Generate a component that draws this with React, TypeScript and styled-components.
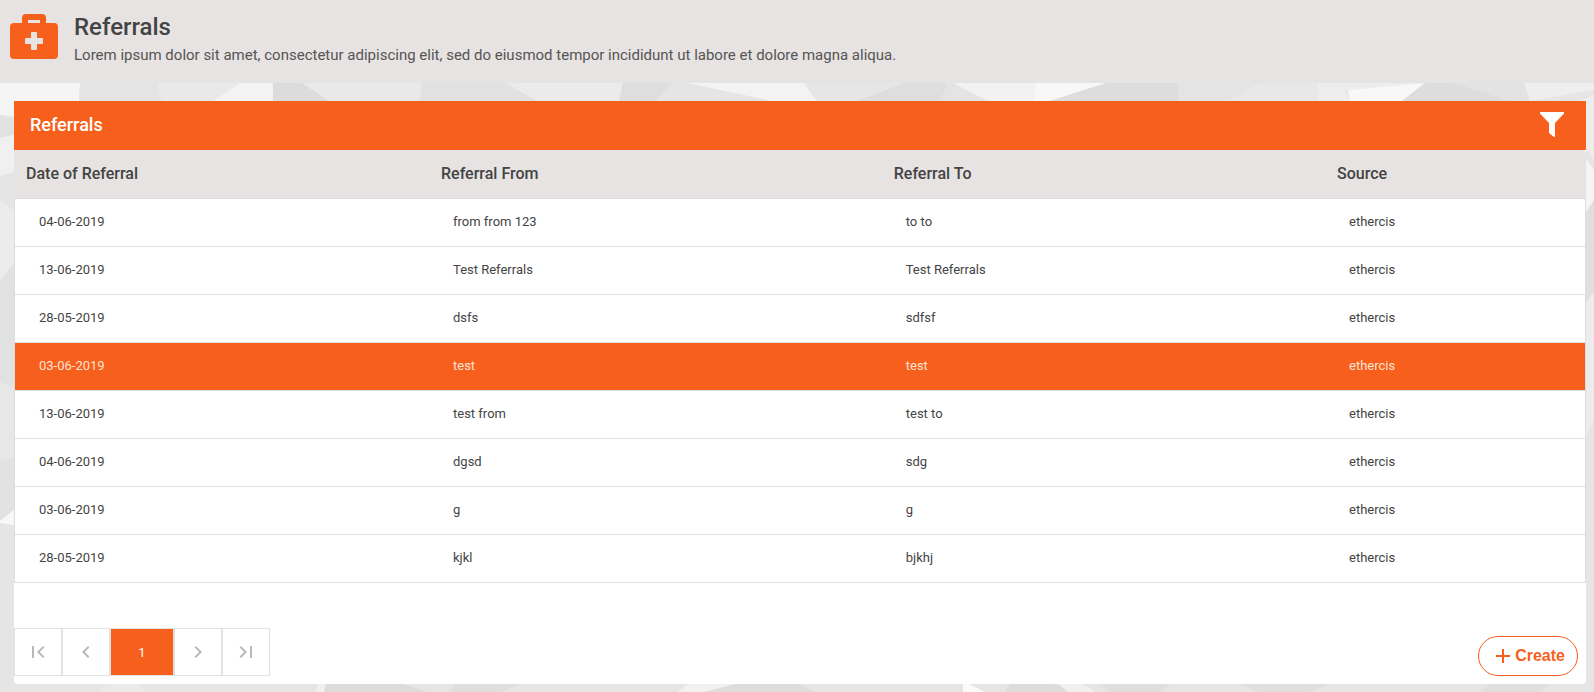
import React, { useState } from "react";
import styled, { createGlobalStyle } from "styled-components";
import {
  MdAdd,
  MdChevronLeft,
  MdChevronRight,
  MdFirstPage,
  MdLastPage,
} from "react-icons/md";

const orange = "#f65f1c";
const greyBar = "#e6e3e2";
const line = "#dddddd";

const GlobalStyle = createGlobalStyle`
  *, *::before, *::after { box-sizing: border-box; }
  body {
    margin: 0;
    background: #e5e5e5;
    color: #444444;
    font-family: Roboto, "Liberation Sans", sans-serif;
  }
`;

const Page = styled.div`
  position: relative;
  min-height: 100vh;
`;

const Backdrop = styled.svg`
  position: absolute;
  inset: 0;
  z-index: -1;
  width: 100%;
  height: 100%;
`;

const PageHeader = styled.header`
  display: flex;
  align-items: flex-start;
  gap: 16px;
  padding: 14px 10px;
  background: ${greyBar};
`;

const KitIcon = styled.svg`
  flex: none;
  width: 48px;
  height: 45px;
  fill: ${orange};
`;

const Heading = styled.h1`
  margin: 0;
  font-size: 24px;
  font-weight: 500;
  line-height: 27px;
`;

const Lead = styled.p`
  margin: 0;
  color: #555555;
  font-size: 15px;
  line-height: 28px;
`;

const Main = styled.main`
  padding: 18px 8px 8px 14px;
`;

const Panel = styled.section`
  border-radius: 4px;
  background: #ffffff;
`;

const PanelBar = styled.div`
  display: flex;
  align-items: center;
  justify-content: space-between;
  height: 49px;
  padding: 0 22px 2px 16px;
  background: ${orange};
  color: #ffffff;
`;

const PanelTitle = styled.h2`
  margin: 0;
  font-size: 18px;
  font-weight: 500;
  line-height: 24px;
`;

const FilterButton = styled.button`
  display: flex;
  padding: 0;
  border: 0;
  background: none;
  color: inherit;
  cursor: pointer;
`;

const Table = styled.table`
  width: 100%;
  table-layout: fixed;
  border-spacing: 0;
  border-collapse: separate;
  text-align: left;
`;

const HeadCell = styled.th<{ $width?: string }>`
  width: ${(p) => p.$width ?? "auto"};
  height: 49px;
  padding: 0 12px 2px;
  border-bottom: 1px solid ${line};
  background: ${greyBar};
  font-size: 16px;
  font-weight: 500;
  &:last-child { border-top-right-radius: 4px; }
`;

const Row = styled.tr<{ $selected: boolean }>`
  background: ${(p) => (p.$selected ? orange : "#ffffff")};
  color: ${(p) => (p.$selected ? "#ffe3d3" : "inherit")};
  cursor: pointer;
`;

const Cell = styled.td`
  height: 48px;
  padding: 0 24px 2px;
  border-bottom: 1px solid ${line};
  font-size: 13px;
  &:first-child { border-left: 1px solid ${line}; }
  &:last-child { border-right: 1px solid ${line}; }
`;

const PanelFooter = styled.footer`
  display: flex;
  align-items: flex-end;
  justify-content: space-between;
  padding: 45px 8px 8px 0;
`;

const Pager = styled.nav`
  display: flex;
`;

const PageButton = styled.button<{ $current?: boolean }>`
  display: flex;
  align-items: center;
  justify-content: center;
  width: ${(p) => (p.$current ? "64px" : "48px")};
  height: 48px;
  padding: 0;
  border: 1px solid #e2e2e2;
  background: ${(p) => (p.$current ? orange : "#ffffff")};
  color: ${(p) => (p.$current ? "#ffffff" : "#b9b9b9")};
  font-family: inherit;
  font-size: 13px;
`;

const CreateButton = styled.button`
  display: flex;
  align-items: center;
  height: 40px;
  padding: 0 12px;
  border: 1px solid ${orange};
  border-radius: 20px;
  background: #ffffff;
  color: ${orange};
  font-family: "Liberation Sans", Arial, sans-serif;
  font-size: 16px;
  font-weight: 700;
  cursor: pointer;
`;

type Facet = [fill: string, points: string];

const facets: Facet[] = [
  // band under the page header
  ["#f5f5f5", "0,83 80,83 79,101 40,120 0,115"],
  ["#e4e4e4", "80,83 157,83 162,120 79,120"],
  ["#e9e9e9", "157,83 240,83 213,101 162,101"],
  ["#f3f3f3", "240,83 273,83 273,101 213,101"],
  ["#dcdcdc", "273,83 302,83 329,101 273,101"],
  ["#e9e9e9", "302,83 422,83 420,101 329,101"],
  ["#e1e1e1", "422,83 506,83 537,101 420,101"],
  ["#ebebeb", "506,83 623,83 619,101 537,101"],
  ["#dedede", "623,83 672,83 655,101 619,101"],
  ["#e5e5e5", "672,83 687,83 772,101 655,101"],
  ["#f3f3f3", "687,83 804,83 817,101 772,101"],
  ["#e6e6e6", "804,83 905,83 857,101 817,101"],
  ["#dedede", "905,83 948,83 940,101 857,101"],
  ["#e4e4e4", "948,83 953,83 1020,101 940,101"],
  ["#f2f2f2", "953,83 1036,83 1034,101 988,101"],
  ["#f8f8f8", "1036,83 1106,83 1050,101 1034,101"],
  ["#dddddd", "1106,83 1178,83 1179,101 1050,101"],
  ["#e4e4e4", "1178,83 1259,83 1227,101 1179,101"],
  ["#e8e8e8", "1259,83 1318,83 1318,101 1227,101"],
  ["#ededed", "1318,83 1425,83 1345,90 1350,101 1318,101"],
  ["#f8f8f8", "1425,83 1402,101 1350,101 1348,90"],
  ["#dddddd", "1425,83 1455,83 1510,101 1402,101"],
  ["#e3e3e3", "1455,83 1524,83 1530,101 1510,101"],
  ["#eeeeee", "1524,83 1594,83 1594,90 1530,101"],
  // left edge
  ["#e2e2e2", "0,115 20,122 20,133 0,138"],
  ["#f0f0f0", "0,138 20,133 20,172 0,176"],
  ["#e5e5e5", "0,176 20,170 20,215 0,200"],
  ["#ececec", "0,200 20,215 20,260 0,281"],
  ["#e1e1e1", "0,281 20,255 20,390 0,382"],
  ["#e7e7e7", "0,382 20,390 20,455 0,462"],
  ["#e2e2e2", "0,462 20,455 20,505 0,521"],
  ["#f7f7f7", "0,521 20,505 20,526 0,523"],
  // right edge
  ["#ededed", "1580,101 1594,95 1594,160 1580,140"],
  ["#f5f5f5", "1580,150 1594,170 1594,200 1580,222"],
  ["#dfdfdf", "1580,222 1594,200 1594,292 1580,310"],
  ["#ececec", "1580,310 1594,292 1594,420 1580,450"],
  // band under the panel
  ["#eaeaea", "98,692 106,684 140,684 147,692"],
  ["#f0f0f0", "318,684 326,684 324,692 316,692"],
  ["#dcdcdc", "326,684 402,684 428,692 324,692"],
  ["#dedede", "455,684 520,684 500,692 450,692"],
  ["#f1f1f1", "688,684 735,684 705,692 677,692"],
  ["#dddddd", "735,684 800,684 815,692 705,692"],
  ["#fafafa", "963,684 969,684 985,692 963,692"],
  ["#dcdcdc", "1010,684 1052,684 1090,692 1005,692"],
  ["#f0f0f0", "1058,684 1082,684 1096,692 1068,692"],
  ["#dedede", "1100,684 1170,684 1160,692 1110,692"],
  ["#dfdfdf", "1240,684 1330,684 1310,692 1260,692"],
  ["#dfdfdf", "1490,684 1550,684 1540,692 1480,692"],
];

const columns = [
  { title: "Date of Referral", width: "26.4%" },
  { title: "Referral From", width: "28.8%" },
  { title: "Referral To", width: "28.2%" },
  { title: "Source" },
];

const referrals = [
  ["04-06-2019", "from from 123", "to to", "ethercis"],
  ["13-06-2019", "Test Referrals", "Test Referrals", "ethercis"],
  ["28-05-2019", "dsfs", "sdfsf", "ethercis"],
  ["03-06-2019", "test", "test", "ethercis"],
  ["13-06-2019", "test from", "test to", "ethercis"],
  ["04-06-2019", "dgsd", "sdg", "ethercis"],
  ["03-06-2019", "g", "g", "ethercis"],
  ["28-05-2019", "kjkl", "bjkhj", "ethercis"],
];

export default function App() {
  const [selected, setSelected] = useState(3);

  return (
    <Page>
      <GlobalStyle />
      <Backdrop viewBox="0 0 1594 692" preserveAspectRatio="none" aria-hidden="true">
        {facets.map(([fill, points]) => (
          <polygon key={points} fill={fill} points={points} />
        ))}
      </Backdrop>

      <PageHeader>
        <KitIcon viewBox="0 0 48 45" aria-hidden="true">
          <path
            fillRule="evenodd"
            d="M16 0h16a4 4 0 0 1 4 4v5h8a4 4 0 0 1 4 4v28a4 4 0 0 1-4 4H4a4 4 0 0 1-4-4V13a4 4 0 0 1 4-4h8V4a4 4 0 0 1 4-4zM18 6v3h12V6zM22 18a1 1 0 0 0-1 1v5h-5a1 1 0 0 0-1 1v4a1 1 0 0 0 1 1h5v5a1 1 0 0 0 1 1h4a1 1 0 0 0 1-1v-5h5a1 1 0 0 0 1-1v-4a1 1 0 0 0-1-1h-5v-5a1 1 0 0 0-1-1z"
          />
        </KitIcon>
        <div>
          <Heading>Referrals</Heading>
          <Lead>
            Lorem ipsum dolor sit amet, consectetur adipiscing elit, sed do eiusmod
            tempor incididunt ut labore et dolore magna aliqua.
          </Lead>
        </div>
      </PageHeader>

      <Main>
        <Panel>
          <PanelBar>
            <PanelTitle>Referrals</PanelTitle>
            <FilterButton type="button" aria-label="Filter">
              <svg width="24" height="25" viewBox="0 0 24 25" fill="currentColor">
                <path d="M1 0h22a1 1 0 0 1 .8 1.8L15 11v13.2a.8.8 0 0 1-1.3.5L9.6 21.5a1 1 0 0 1-.6-1V11L.2 1.8A1 1 0 0 1 1 0z" />
              </svg>
            </FilterButton>
          </PanelBar>

          <Table>
            <thead>
              <tr>
                {columns.map((column) => (
                  <HeadCell key={column.title} scope="col" $width={column.width}>
                    {column.title}
                  </HeadCell>
                ))}
              </tr>
            </thead>
            <tbody>
              {referrals.map((referral, index) => (
                <Row
                  key={index}
                  $selected={index === selected}
                  onClick={() => setSelected(index)}
                >
                  {referral.map((value, column) => (
                    <Cell key={column}>{value}</Cell>
                  ))}
                </Row>
              ))}
            </tbody>
          </Table>

          <PanelFooter>
            <Pager aria-label="Pages">
              <PageButton type="button" aria-label="First page">
                <MdFirstPage size={24} />
              </PageButton>
              <PageButton type="button" aria-label="Previous page">
                <MdChevronLeft size={24} />
              </PageButton>
              <PageButton type="button" $current aria-current="page">
                1
              </PageButton>
              <PageButton type="button" aria-label="Next page">
                <MdChevronRight size={24} />
              </PageButton>
              <PageButton type="button" aria-label="Last page">
                <MdLastPage size={24} />
              </PageButton>
            </Pager>
            <CreateButton type="button">
              <MdAdd size={24} />
              Create
            </CreateButton>
          </PanelFooter>
        </Panel>
      </Main>
    </Page>
  );
}
